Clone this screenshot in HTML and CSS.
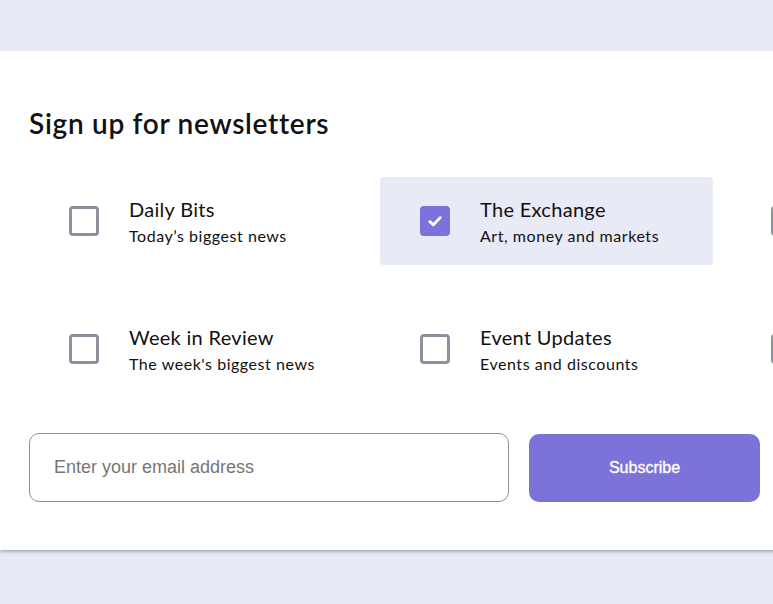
FILE: index.html
```html
<!DOCTYPE html>
<html lang="en">
<head>
<meta charset="utf-8">
<title>Sign up for newsletters</title>
<link rel="stylesheet" href="styles.css">
</head>
<body>
<main class="card">
  <h2 class="title">Sign up for newsletters</h2>
  <div class="options">
    <label class="option">
      <span class="box"></span>
      <span class="text"><span class="name">Daily Bits</span><span class="desc">Today’s biggest news</span></span>
    </label>
    <label class="option selected">
      <span class="box checked"><svg viewBox="0 0 16 16" width="18" height="18"><path d="M3.4 8.6 L6.6 11.4 L12.6 5" fill="none" stroke="#fff" stroke-width="2.5" stroke-linecap="round" stroke-linejoin="round"/></svg></span>
      <span class="text"><span class="name">The Exchange</span><span class="desc">Art, money and markets</span></span>
    </label>
    <label class="option">
      <span class="box"></span>
    </label>
    <label class="option">
      <span class="box"></span>
      <span class="text"><span class="name">Week in Review</span><span class="desc">The week's biggest news</span></span>
    </label>
    <label class="option">
      <span class="box"></span>
      <span class="text"><span class="name">Event Updates</span><span class="desc">Events and discounts</span></span>
    </label>
    <label class="option">
      <span class="box"></span>
    </label>
  </div>
  <form class="signup">
    <input class="email" type="email" placeholder="Enter your email address">
    <button class="subscribe" type="button">Subscribe</button>
  </form>
</main>
</body>
</html>
```

FILE: styles.css
```css
html, body {
  margin: 0;
  padding: 0;
  overflow: hidden;
}
body {
  background: #e8eaf6;
  font-family: Lato, "Noto Sans", sans-serif;
  color: #111;
  height: 604px;
}
.card {
  background: #fff;
  margin-top: 51px;
  width: 1100px;
  height: 499px;
  box-sizing: border-box;
  padding: 56px 29px 0;
  box-shadow: 0 2px 3px rgba(60, 60, 80, 0.35);
}
.title {
  margin: 0;
  font-size: 28px;
  line-height: 32px;
  font-weight: 600;
  letter-spacing: 0.7px;
  color: #111;
}
.options {
  display: grid;
  grid-template-columns: repeat(3, 333px);
  grid-auto-rows: 88px;
  column-gap: 18px;
  row-gap: 40px;
  margin-top: 38px;
}
.option {
  display: flex;
  align-items: center;
  gap: 30px;
  padding-left: 40px;
  border-radius: 4px;
}
.option.selected {
  background: #e8eaf6;
}
.box {
  width: 30px;
  height: 30px;
  box-sizing: border-box;
  border: 3px solid #8e909d;
  border-radius: 4px;
  flex: none;
  display: flex;
  align-items: center;
  justify-content: center;
}
.box.checked {
  background: #7b73d9;
  border-color: #7b73d9;
}
.text {
  display: flex;
  flex-direction: column;
  padding-top: 4px;
}
.name {
  font-size: 20px;
  line-height: 24px;
  letter-spacing: 0.3px;
  color: #111;
}
.desc {
  font-size: 16px;
  line-height: 26px;
  letter-spacing: 0.55px;
  margin-top: 2px;
  color: #111;
}
.signup {
  display: flex;
  align-items: center;
  gap: 20px;
  margin-top: 40px;
}
.email {
  width: 480px;
  height: 69px;
  box-sizing: border-box;
  border: 1px solid #8e909d;
  border-radius: 10px;
  padding: 0 24px;
  font-family: "Liberation Sans", Arial, sans-serif;
  font-size: 18px;
  color: #333;
  outline: none;
}
.email::placeholder {
  color: #767676;
}
.subscribe {
  width: 231px;
  height: 68px;
  border: none;
  border-radius: 10px;
  background: #7b73d9;
  color: #fff;
  font-family: "Liberation Sans", Arial, sans-serif;
  font-size: 16px;
  font-weight: 400;
  -webkit-text-stroke: 0.35px #fff;
}
```
